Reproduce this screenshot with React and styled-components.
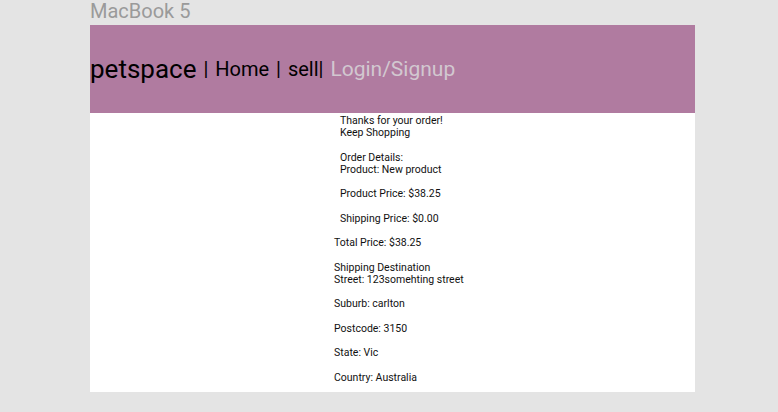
import React from "react";
import styled, { createGlobalStyle } from "styled-components";

const Global = createGlobalStyle`
  body {
    margin: 0;
    background: #e4e4e4;
    font-family: Roboto, "Liberation Sans", sans-serif;
  }
`;

const Canvas = styled.div`
  width: 778px;
  height: 412px;
  padding-left: 90px;
  box-sizing: border-box;
  overflow: hidden;
`;

const FrameLabel = styled.div`
  font-size: 20px;
  line-height: 23px;
  color: #9a9a9a;
  margin-bottom: 2px;
`;

const Frame = styled.div`
  width: 605px;
  background: #fff;
  height: 367px;
`;

const Header = styled.header`
  height: 88px;
  background: #b07ba0;
  display: flex;
  align-items: center;
  white-space: pre;
  word-spacing: 2px;
`;

const Brand = styled.span`
  font-size: 26px;
  color: #000;
`;

const NavText = styled.span`
  font-size: ${(p) => (p.$muted ? "21px" : "20px")};
  color: ${(p) => (p.$muted ? "#d2c8d0" : "#000")};
`;

const Content = styled.main`
  padding: 2px 0 0 244px;
  font-size: 10.5px;
  line-height: 12px;
  color: #111;
`;

const Block = styled.div`
  padding-left: ${(p) => (p.$indent ? "6px" : "0")};
`;

const Para = styled.p`
  margin: 0 0 12.5px;
`;

export default function App() {
  return (
    <>
      <Global />
      <Canvas>
        <FrameLabel>MacBook 5</FrameLabel>
        <Frame>
          <Header>
            <Brand>petspace</Brand>
            <NavText> | Home | sell| </NavText>
            <NavText $muted>Login/Signup</NavText>
          </Header>
          <Content>
            <Block $indent>
              <Para>
                Thanks for your order!
                <br />
                Keep Shopping
              </Para>
              <Para>
                Order Details:
                <br />
                Product: New product
              </Para>
              <Para>Product Price: $38.25</Para>
              <Para>Shipping Price: $0.00</Para>
            </Block>
            <Block>
              <Para>Total Price: $38.25</Para>
              <Para>
                Shipping Destination
                <br />
                Street: 123somehting street
              </Para>
              <Para>Suburb: carlton</Para>
              <Para>Postcode: 3150</Para>
              <Para>State: Vic</Para>
              <Para>Country: Australia</Para>
            </Block>
          </Content>
        </Frame>
      </Canvas>
    </>
  );
}
